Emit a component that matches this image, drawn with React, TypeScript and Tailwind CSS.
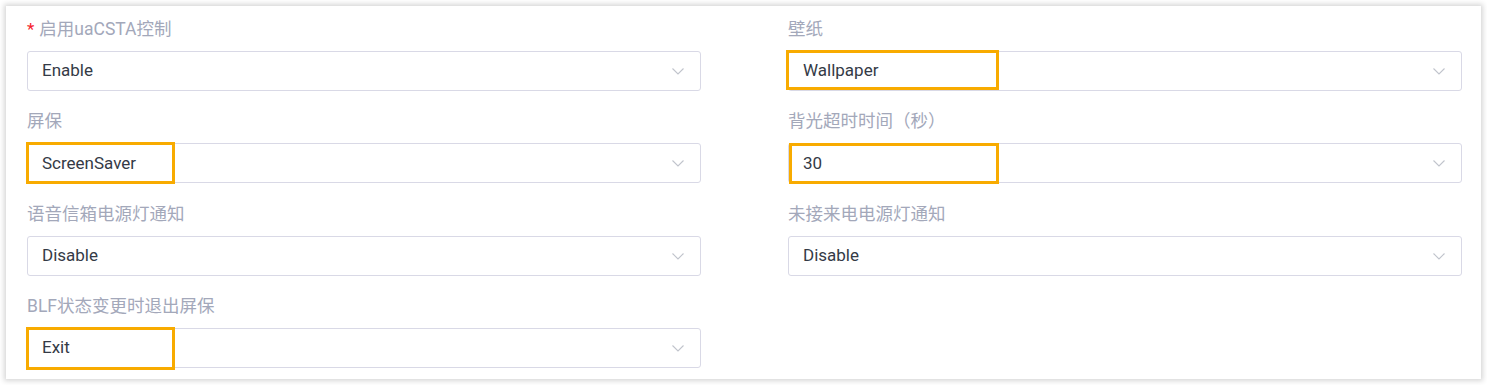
import React from 'react'

type Mark = { left: number; top: number; width: number; height: number }
type Field = { label: string; value: string; required?: boolean; mark?: Mark }

const FIELDS: Field[] = [
  { label: '启用uaCSTA控制', value: 'Enable', required: true },
  { label: '壁纸', value: 'Wallpaper', mark: { left: -2, top: -1, width: 213, height: 40 } },
  { label: '屏保', value: 'ScreenSaver', mark: { left: -1, top: -1, width: 149, height: 42 } },
  { label: '背光超时时间（秒）', value: '30', mark: { left: 1, top: 0, width: 210, height: 41 } },
  { label: '语音信箱电源灯通知', value: 'Disable' },
  { label: '未接来电电源灯通知', value: 'Disable' },
  { label: 'BLF状态变更时退出屏保', value: 'Exit', mark: { left: -1, top: -1, width: 149, height: 43 } },
]

// ─── Chevron ──────────────────────────────────────────────────────────────────

function Chevron() {
  return (
    <svg width="14" height="14" viewBox="0 0 14 14" fill="none" className="text-[#c0c4cc]">
      <path d="M1.5 4.5 L7 10 L12.5 4.5" stroke="currentColor" strokeWidth="1.1" />
    </svg>
  )
}

// ─── One select field ─────────────────────────────────────────────────────────

function SelectField({ f }: { f: Field }) {
  return (
    <div className="flex flex-col">
      <div className="h-[22px] leading-[22px] mb-[11px] text-[17.5px] text-[#a3a8ba] flex items-center">
        {f.required && <span className="text-[#f5222d] mr-[5px] text-[17px]">*</span>}
        {f.label}
      </div>
      <div className="relative h-[40px] border border-[#d9d9e6] rounded-[3px] bg-white flex items-center justify-between pl-[14px] pr-[15px]">
        <span className="text-[17px] text-[#343a46]">{f.value}</span>
        <Chevron />
        {f.mark && (
          <div
            className="absolute border-[3px] border-[#f8ab00] pointer-events-none"
            style={{ left: f.mark.left - 1, top: f.mark.top - 1, width: f.mark.width, height: f.mark.height }}
          />
        )}
      </div>
    </div>
  )
}

export default function App() {
  return (
    <div
      className="w-[1487px] h-[385px] bg-white pt-[6px] pl-[6px]"
      style={{ fontFamily: 'Roboto, "Noto Sans CJK SC", sans-serif' }}
    >
      <div className="w-[1475px] h-[373px] bg-white shadow-[0_0_5px_2px_rgba(0,0,0,0.16)] pt-[12px] pl-[21px] pr-[19px]">
        <div className="grid grid-cols-2 gap-x-[87px] gap-y-[19.3px]">
          {FIELDS.map((f, i) => (
            <SelectField key={i} f={f} />
          ))}
        </div>
      </div>
    </div>
  )
}
